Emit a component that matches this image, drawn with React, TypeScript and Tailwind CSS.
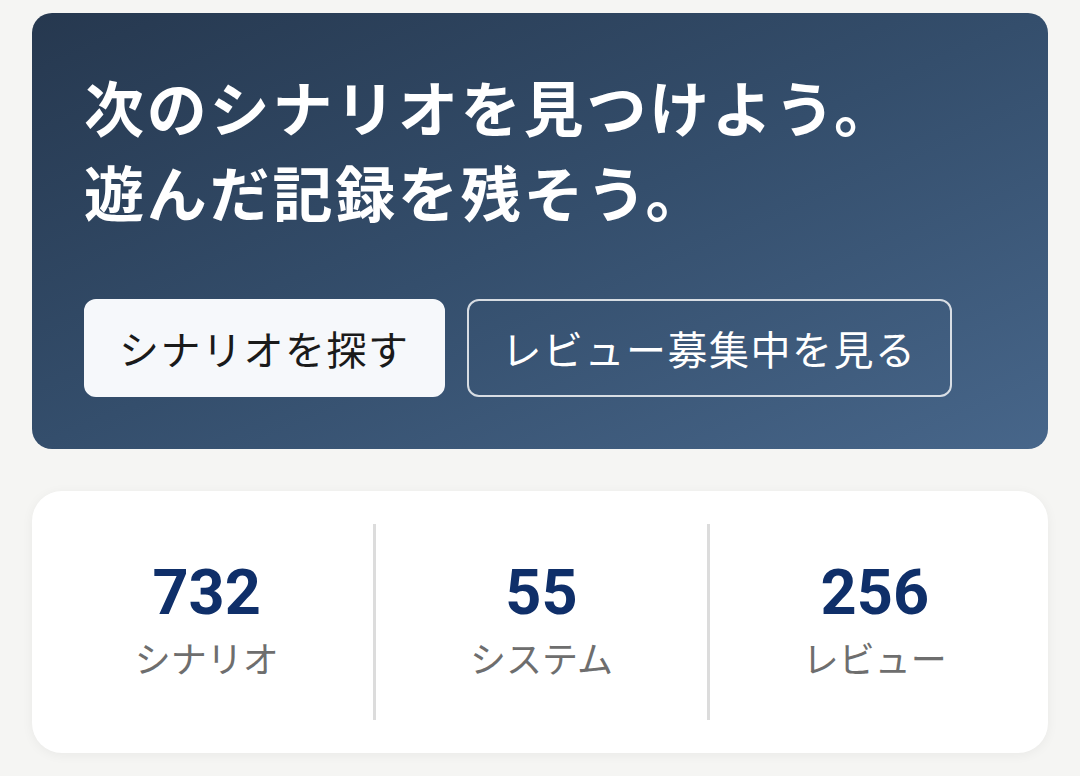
import React from "react";

const jp = { fontFamily: '"Noto Sans CJK JP", "Noto Sans", sans-serif' };

function Stat({ value, label, first }: { value: string; label: string; first?: boolean }) {
  return (
    <div className={`flex flex-col items-center justify-center pb-[6px] ${first ? "" : "border-l-[3px] border-[#dcdcdc]"}`}>
      <div
        className="text-[63px] leading-[76px] font-bold text-[#0f2f69]"
        style={{ fontFamily: 'Roboto, "Liberation Sans", sans-serif' }}
      >
        {value}
      </div>
      <div className="text-[36px] leading-[52px] text-[#6e6e6e]" style={jp}>
        {label}
      </div>
    </div>
  );
}

export default function App() {
  return (
    <div className="min-h-[776px] w-[1080px] bg-[#f5f5f3] px-[32px] pt-[13px]" style={jp}>
      <div className="rounded-[20px] bg-gradient-to-br from-[#26384f] via-[#344e6c] to-[#47668a] px-[52px] pt-[50px] pb-[52px]">
        <h1 className="text-[60px] leading-[85px] font-bold text-white tracking-[2.8px]">
          次のシナリオを見つけよう。
          <br />
          遊んだ記録を残そう。
        </h1>
        <div className="mt-[66px] flex gap-[22px]">
          <button className="h-[98px] rounded-[12px] border-2 border-[#f6f8fb] bg-[#f6f8fb] px-[33px] text-[40px] tracking-[1.5px] text-[#1a1a1a]">
            シナリオを探す
          </button>
          <button className="h-[98px] rounded-[12px] border-2 border-white/80 bg-transparent px-[33px] text-[40px] tracking-[1.5px] text-white">
            レビュー募集中を見る
          </button>
        </div>
      </div>
      <div className="mt-[42px] grid h-[262px] grid-cols-3 rounded-[30px] bg-white px-[8px] py-[33px] shadow-[0_2px_12px_rgba(0,0,0,0.05)]">
        <Stat value="732" label="シナリオ" first />
        <Stat value="55" label="システム" />
        <Stat value="256" label="レビュー" />
      </div>
    </div>
  );
}
